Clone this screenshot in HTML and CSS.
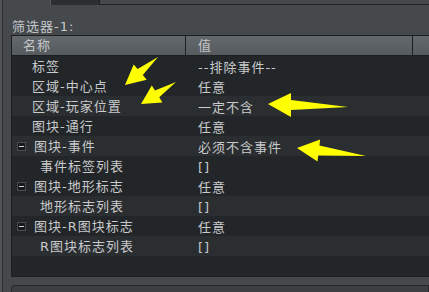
FILE: index.html
```html
<!DOCTYPE html>
<html lang="zh-CN">
<head>
  <meta charset="UTF-8" />
  <title>筛选器</title>
  <link rel="stylesheet" href="styles.css">
</head>
<body>

  <div class="window">
    <div class="edge"></div>

    <div class="main">
      <div class="topbar">
        <div class="tab"></div>
        <div class="topline"></div>
      </div>

      <div class="filter-title">筛选器-1:</div>

      <div class="tree">
        <div class="tree-head">
          <div class="col-name">名称</div>
          <div class="col-value">值</div>
          <div class="col-extra"></div>
        </div>

        <div class="row">
          <div class="col-name top">标签</div>
          <div class="col-value">--排除事件--</div>
        </div>
        <div class="row">
          <div class="col-name top">区域-中心点</div>
          <div class="col-value">任意</div>
        </div>
        <div class="row alt">
          <div class="col-name top">区域-玩家位置</div>
          <div class="col-value">一定不含</div>
        </div>
        <div class="row">
          <div class="col-name top">图块-通行</div>
          <div class="col-value">任意</div>
        </div>
        <div class="row alt">
          <div class="col-name top"><span class="expander"></span>图块-事件</div>
          <div class="col-value">必须不含事件</div>
        </div>
        <div class="row">
          <div class="col-name child">事件标签列表</div>
          <div class="col-value">[]</div>
        </div>
        <div class="row">
          <div class="col-name top"><span class="expander"></span>图块-地形标志</div>
          <div class="col-value">任意</div>
        </div>
        <div class="row alt">
          <div class="col-name child">地形标志列表</div>
          <div class="col-value">[]</div>
        </div>
        <div class="row">
          <div class="col-name top"><span class="expander"></span>图块-R图块标志</div>
          <div class="col-value">任意</div>
        </div>
        <div class="row alt">
          <div class="col-name child">R图块标志列表</div>
          <div class="col-value">[]</div>
        </div>
      </div>

      <div class="next-panel"></div>
    </div>
  </div>

  <!-- yellow annotation arrows drawn over the screenshot -->
  <svg class="arrows" width="429" height="292" viewBox="0 0 429 292">
    <polygon points="125,85 146.7,79.7 142.8,75.1 158,57 137.6,69.1 133.7,64.5" />
    <polygon points="141,104 162.4,102.4 159.2,97.3 176,82 155,90.5 151.8,85.4" />
    <polygon points="268,104 291,93 291,100 348,107 291,110 291,117" />
    <polygon points="297,148 320.1,139.6 319.4,145.5 366,156 318.2,155.5 317.5,161.4" />
  </svg>

</body>
</html>
```

FILE: styles.css
```css
html, body {
  margin: 0;
  padding: 0;
}

body {
  width: 429px;
  height: 292px;
  overflow: hidden;
  position: relative;
  background-color: #45494c;
  color: #c8cacc;
  font-family: "DejaVu Sans", "Noto Sans CJK SC", sans-serif;
  font-size: 13px;
  letter-spacing: 1px;
}

.window {
  display: flex;
  height: 292px;
}

.edge {
  width: 2px;
  background-color: #4f5356;
  border-right: 1px solid #2a2d2f;
  flex-shrink: 0;
}

.main {
  flex: 1;
  min-width: 0;
  display: flex;
  flex-direction: column;
}

.topbar {
  display: flex;
  height: 5px;
}

.tab {
  margin-left: 47px;
  width: 48px;
  background-color: #2c2f32;
  border-left: 1px solid #5a5e61;
  border-right: 1px solid #1e2022;
}

.topline {
  flex: 1;
  border-bottom: 1px solid #1f2123;
}

.filter-title {
  margin-top: 14px;
  padding-left: 9px;
  height: 16px;
  line-height: 16px;
  color: #c4c8cc;
}

.tree {
  margin-left: 8px;
  height: 240px;
  border: 1px solid #1c1e20;
  border-right: none;
  background-color: #232629;
  overflow: hidden;
}

.tree-head {
  display: flex;
  height: 19px;
  line-height: 19px;
  border-bottom: 1px solid #1c1e20;
  background: linear-gradient(#63686c, #565b5f);
  color: #c4c6c8;
}

.tree-head .col-name {
  padding-left: 11px;
}

.col-name {
  width: 173px;
  flex-shrink: 0;
  box-sizing: border-box;
  display: flex;
  align-items: center;
  white-space: nowrap;
}

.col-value {
  width: 226px;
  flex-shrink: 0;
  box-sizing: border-box;
  padding-left: 12px;
  white-space: nowrap;
}

.tree-head .col-value,
.tree-head .col-extra {
  border-left: 1px solid #1c1e20;
}

.tree-head .col-value {
  width: 227px;
}

.col-extra {
  flex: 1;
}

.row {
  display: flex;
  height: 20px;
  line-height: 20px;
  padding-top: 2px;
  box-sizing: border-box;
  background-color: #232629;
}

.row .col-value {
  margin-left: 1px;
}

.row.alt {
  background-color: #2b2e31;
}

.col-name.top {
  padding-left: 20px;
}

.col-name.child {
  padding-left: 28px;
}

.expander {
  width: 7px;
  height: 7px;
  margin-left: -15px;
  margin-right: 8px;
  margin-top: -2px;
  border: 1px solid #4a4e52;
  background-color: #17191b;
  position: relative;
  flex-shrink: 0;
}

.expander::after {
  content: "";
  position: absolute;
  left: 1px;
  top: 3px;
  width: 5px;
  height: 1px;
  background-color: #d0d2d4;
}

.next-panel {
  margin-top: 8px;
  margin-left: 8px;
  flex: 1;
  border: 1px solid #26292b;
  border-bottom: none;
  border-top-left-radius: 4px;
  background-color: #3b3f42;
}

.arrows {
  position: absolute;
  top: 0;
  left: 0;
  pointer-events: none;
}

.arrows polygon {
  fill: #ffff00;
}
```
